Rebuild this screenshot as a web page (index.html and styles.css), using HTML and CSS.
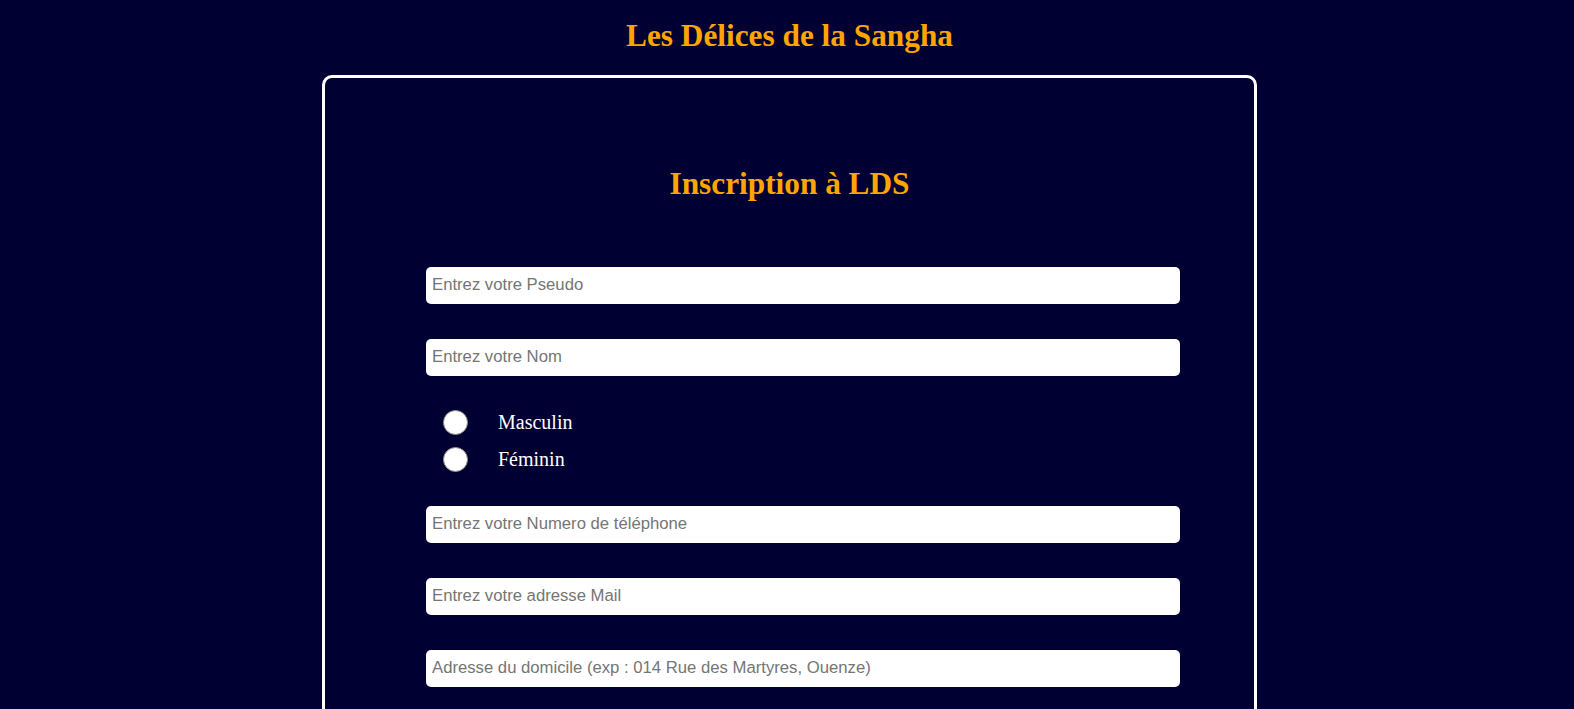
FILE: index.html
```html
<!DOCTYPE html>
<html lang="fr">
<head>
<meta charset="utf-8">
<title>Les Délices de la Sangha</title>
<link rel="stylesheet" href="styles.css">
</head>
<body>
<div class="page">
  <h1 class="site-title">Les Délices de la Sangha</h1>
  <div class="card">
    <h2 class="form-title">Inscription à LDS</h2>
    <form class="form">
      <input class="field" type="text" placeholder="Entrez votre Pseudo">
      <input class="field" type="text" placeholder="Entrez votre Nom">
      <div class="radios">
        <label class="radio-row"><input class="radio" type="radio" name="sexe" value="m"><span class="radio-label">Masculin</span></label>
        <label class="radio-row"><input class="radio" type="radio" name="sexe" value="f"><span class="radio-label">Féminin</span></label>
      </div>
      <input class="field" type="tel" placeholder="Entrez votre Numero de téléphone">
      <input class="field" type="email" placeholder="Entrez votre adresse Mail">
      <input class="field" type="text" placeholder="Adresse du domicile (exp : 014 Rue des Martyres, Ouenze)">
    </form>
  </div>
</div>
</body>
</html>
```

FILE: styles.css
```css
html, body {
  margin: 0;
  padding: 0;
  background: #000033;
  height: 100%;
  overflow: hidden;
}

.page {
  width: 935px;
  margin-left: 322px;
  padding-top: 19px;
  font-family: "Liberation Serif", "Times New Roman", serif;
}

.site-title {
  margin: 0 0 22px 0;
  font-size: 31.3px;
  line-height: 34px;
  font-weight: bold;
  color: #ffa500;
  text-align: center;
}

.card {
  box-sizing: border-box;
  width: 935px;
  height: 800px;
  border: 3px solid #ffffff;
  border-radius: 10px;
  padding-top: 89px;
}

.form-title {
  margin: 0;
  font-size: 31.3px;
  line-height: 34px;
  font-weight: bold;
  color: #ffa500;
  text-align: center;
}

.form {
  display: flex;
  flex-direction: column;
  align-items: flex-start;
  gap: 35px;
  margin-top: 66px;
  padding-left: 101px;
}

.field {
  box-sizing: border-box;
  width: 754px;
  height: 37px;
  margin: 0;
  padding: 0 6px 1px;
  border: none;
  border-radius: 5px;
  background: #ffffff;
  font-family: "Liberation Sans", Arial, sans-serif;
  font-size: 16.7px;
  color: #000;
  outline: none;
}

.field::placeholder {
  color: #757575;
}

.radios {
  display: flex;
  flex-direction: column;
  margin: -7px 0;
}

.radio-row {
  display: flex;
  align-items: center;
  height: 37px;
  padding-left: 17px;
  cursor: pointer;
}

.radio {
  appearance: none;
  -webkit-appearance: none;
  box-sizing: border-box;
  width: 25px;
  height: 25px;
  margin: 0;
  border: 1px solid #8a8a8a;
  border-radius: 50%;
  background: #ffffff;
}

.radio-label {
  margin-left: 30px;
  font-family: "Liberation Serif", "Times New Roman", serif;
  font-size: 20px;
  line-height: 23px;
  color: #ffffff;
}
```
